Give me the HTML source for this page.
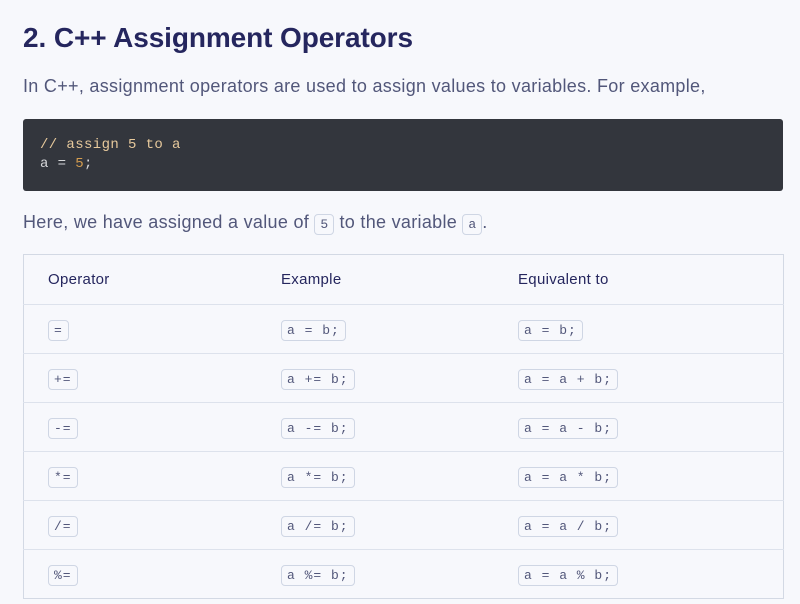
<!DOCTYPE html>
<html><head><style>
body{margin:0;background:#f7f8fc;font-family:"Liberation Sans",sans-serif;width:800px;height:604px;overflow:hidden;position:relative;color:#25265e}
h2{position:absolute;left:23px;top:22px;margin:0;font-size:28px;font-weight:bold;color:#25265e;letter-spacing:-0.1px}
.p{position:absolute;left:23px;font-size:18px;color:#52577a;margin:0;letter-spacing:0.3px}
.code{position:absolute;left:23px;top:119px;width:760px;height:72px;background:#33363d;border-radius:3px;font-family:"Liberation Mono",monospace;font-size:14px;line-height:19px;color:#d6d7da;letter-spacing:0.4px}
.code div{position:absolute;left:17px;top:17px}
.c{color:#e7c99c}.n{color:#d59d4f}
code{font-family:"Liberation Mono",monospace;font-size:13px;color:#52577a;border:1px solid #cfd6e4;border-radius:4px;padding:2px 5px;background:#f7f8fc;white-space:pre;letter-spacing:1px}
.p code{letter-spacing:0;padding:2px 5px}
table{position:absolute;left:23px;top:254px;width:761px;border-collapse:collapse;border:1px solid #d3d9e4;border-radius:4px;letter-spacing:0.3px}
td,th{height:48px;border-top:1px solid #dde2ec;text-align:left;font-weight:normal;font-size:15px;color:#25265e;padding:0}
th{height:49px;border-top:none}
td:first-child,th:first-child{padding-left:24px;width:233px}
td:nth-child(2),th:nth-child(2){width:237px}
</style></head><body>
<h2>2. C++ Assignment Operators</h2>
<p class="p" style="top:76px">In C++, assignment operators are used to assign values to variables. For example,</p>
<div class="code"><div><span class="c">// assign 5 to a</span><br>a = <span class="n">5</span>;</div></div>
<p class="p" style="top:212px">Here, we have assigned a value of <code>5</code> to the variable <code>a</code>.</p>
<table>
<tr><th>Operator</th><th>Example</th><th>Equivalent to</th></tr>
<tr><td><code>=</code></td><td><code>a = b;</code></td><td><code>a = b;</code></td></tr>
<tr><td><code>+=</code></td><td><code>a += b;</code></td><td><code>a = a + b;</code></td></tr>
<tr><td><code>-=</code></td><td><code>a -= b;</code></td><td><code>a = a - b;</code></td></tr>
<tr><td><code>*=</code></td><td><code>a *= b;</code></td><td><code>a = a * b;</code></td></tr>
<tr><td><code>/=</code></td><td><code>a /= b;</code></td><td><code>a = a / b;</code></td></tr>
<tr><td><code>%=</code></td><td><code>a %= b;</code></td><td><code>a = a % b;</code></td></tr>
</table>
</body></html>
